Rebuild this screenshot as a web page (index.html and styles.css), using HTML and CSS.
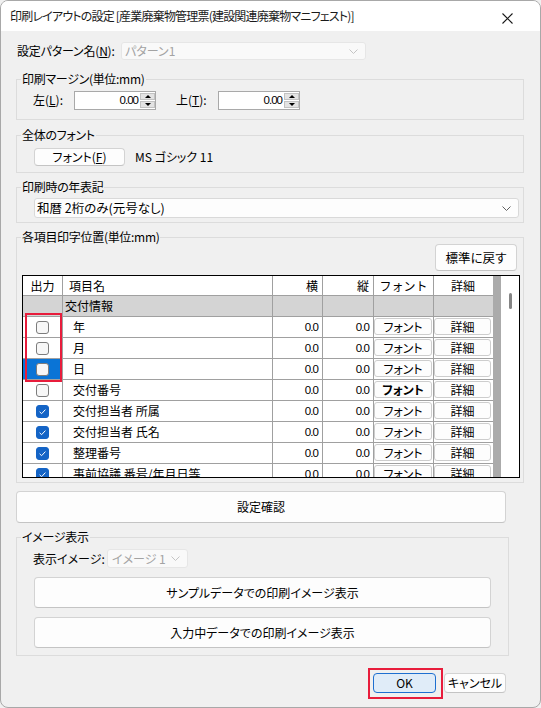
FILE: index.html
```html
<!DOCTYPE html>
<html lang="ja">
<head>
<meta charset="utf-8">
<title>印刷レイアウトの設定</title>
<link rel="stylesheet" href="styles.css">
</head>
<body>
<div class="window">
  <div class="titlebar">
    <span class="title">印刷レイアウトの設定 [産業廃棄物管理票(建設関連廃棄物マニフェスト)]</span>
    <svg class="close" width="11" height="11" viewBox="0 0 11 11"><path d="M0.5 0.5 L10.5 10.5 M10.5 0.5 L0.5 10.5" stroke="#1a1a1a" stroke-width="1.1" fill="none"/></svg>
  </div>
  <div class="content">
    <div class="pattern-row">
      <span class="lbl pattern-lbl">設定パターン名(<u>N</u>):</span>
      <div class="combo disabled pattern-combo">
        <span class="combo-text">パターン1</span>
        <svg class="chev" width="9" height="5" viewBox="0 0 9 5"><path d="M0.5 0.5 L4.5 4.5 L8.5 0.5" stroke="#c4c4c4" fill="none"/></svg>
      </div>
    </div>

    <div class="group margin-group">
      <span class="group-label">印刷マージン(単位:mm)</span>
      <div class="margin-row">
        <span class="lbl spin-lbl">左(<u>L</u>):</span>
        <div class="spin">
          <span class="spin-val">0.00</span>
          <span class="spin-btns"><span class="spin-btn"><i class="tri-up"></i></span><span class="spin-btn"><i class="tri-down"></i></span></span>
        </div>
        <span class="lbl spin-lbl spin-lbl2">上(<u>T</u>):</span>
        <div class="spin">
          <span class="spin-val">0.00</span>
          <span class="spin-btns"><span class="spin-btn"><i class="tri-up"></i></span><span class="spin-btn"><i class="tri-down"></i></span></span>
        </div>
      </div>
    </div>

    <div class="group font-group">
      <span class="group-label">全体のフォント</span>
      <div class="font-row">
        <button class="btn font-btn">フォント(<u>F</u>)</button>
        <span class="font-name">MS ゴシック 11</span>
      </div>
    </div>

    <div class="group year-group">
      <span class="group-label">印刷時の年表記</span>
      <div class="combo year-combo">
        <span class="combo-text">和暦 2桁のみ(元号なし)</span>
        <svg class="chev" width="9" height="5" viewBox="0 0 9 5"><path d="M0.5 0.5 L4.5 4.5 L8.5 0.5" stroke="#606060" fill="none"/></svg>
      </div>
    </div>

    <div class="group pos-group">
      <span class="group-label">各項目印字位置(単位:mm)</span>
      <div class="reset-row">
        <button class="btn reset-btn">標準に戻す</button>
      </div>
      <div class="table">
        <div class="rows">
          <div class="row head">
            <div class="cell c-out center">出力</div>
            <div class="cell c-name hname">項目名</div>
            <div class="cell c-x right">横</div>
            <div class="cell c-y right">縦</div>
            <div class="cell c-font center">フォント</div>
            <div class="cell c-det center">詳細</div>
          </div>
          <div class="row grp">
            <div class="cell c-out"></div>
            <div class="cell c-name gname">交付情報</div>
            <div class="cell c-x"></div>
            <div class="cell c-y"></div>
            <div class="cell c-font"></div>
            <div class="cell c-det"></div>
          </div>
          <div class="row">
            <div class="cell c-out center"><span class="cb"></span></div>
            <div class="cell c-name iname">年</div>
            <div class="cell c-x right num">0.0</div>
            <div class="cell c-y right num">0.0</div>
            <div class="cell c-font"><span class="cbtn">フォント</span></div>
            <div class="cell c-det"><span class="cbtn">詳細</span></div>
          </div>
          <div class="row">
            <div class="cell c-out center"><span class="cb"></span></div>
            <div class="cell c-name iname">月</div>
            <div class="cell c-x right num">0.0</div>
            <div class="cell c-y right num">0.0</div>
            <div class="cell c-font"><span class="cbtn">フォント</span></div>
            <div class="cell c-det"><span class="cbtn">詳細</span></div>
          </div>
          <div class="row">
            <div class="cell c-out center sel"><span class="cb"></span></div>
            <div class="cell c-name iname">日</div>
            <div class="cell c-x right num">0.0</div>
            <div class="cell c-y right num">0.0</div>
            <div class="cell c-font"><span class="cbtn">フォント</span></div>
            <div class="cell c-det"><span class="cbtn">詳細</span></div>
          </div>
          <div class="row">
            <div class="cell c-out center"><span class="cb"></span></div>
            <div class="cell c-name iname">交付番号</div>
            <div class="cell c-x right num">0.0</div>
            <div class="cell c-y right num">0.0</div>
            <div class="cell c-font"><span class="cbtn bold">フォント</span></div>
            <div class="cell c-det"><span class="cbtn">詳細</span></div>
          </div>
          <div class="row">
            <div class="cell c-out center"><span class="cb on"><svg width="13" height="13" viewBox="0 0 13 13"><path d="M3.6 6.8 L5.6 8.7 L9.4 4.6" stroke="#fff" stroke-width="1" fill="none"/></svg></span></div>
            <div class="cell c-name iname">交付担当者 所属</div>
            <div class="cell c-x right num">0.0</div>
            <div class="cell c-y right num">0.0</div>
            <div class="cell c-font"><span class="cbtn">フォント</span></div>
            <div class="cell c-det"><span class="cbtn">詳細</span></div>
          </div>
          <div class="row">
            <div class="cell c-out center"><span class="cb on"><svg width="13" height="13" viewBox="0 0 13 13"><path d="M3.6 6.8 L5.6 8.7 L9.4 4.6" stroke="#fff" stroke-width="1" fill="none"/></svg></span></div>
            <div class="cell c-name iname">交付担当者 氏名</div>
            <div class="cell c-x right num">0.0</div>
            <div class="cell c-y right num">0.0</div>
            <div class="cell c-font"><span class="cbtn">フォント</span></div>
            <div class="cell c-det"><span class="cbtn">詳細</span></div>
          </div>
          <div class="row">
            <div class="cell c-out center"><span class="cb on"><svg width="13" height="13" viewBox="0 0 13 13"><path d="M3.6 6.8 L5.6 8.7 L9.4 4.6" stroke="#fff" stroke-width="1" fill="none"/></svg></span></div>
            <div class="cell c-name iname">整理番号</div>
            <div class="cell c-x right num">0.0</div>
            <div class="cell c-y right num">0.0</div>
            <div class="cell c-font"><span class="cbtn">フォント</span></div>
            <div class="cell c-det"><span class="cbtn">詳細</span></div>
          </div>
          <div class="row">
            <div class="cell c-out center"><span class="cb on"><svg width="13" height="13" viewBox="0 0 13 13"><path d="M3.6 6.8 L5.6 8.7 L9.4 4.6" stroke="#fff" stroke-width="1" fill="none"/></svg></span></div>
            <div class="cell c-name iname">事前協議 番号/年月日等</div>
            <div class="cell c-x right num">0.0</div>
            <div class="cell c-y right num">0.0</div>
            <div class="cell c-font"><span class="cbtn">フォント</span></div>
            <div class="cell c-det"><span class="cbtn">詳細</span></div>
          </div>
        </div>
        <div class="vscroll"><span class="thumb"></span></div>
        <span class="mark mark-cb"></span>
      </div>
    </div>

    <button class="btn confirm-btn">設定確認</button>

    <div class="group image-group">
      <span class="group-label">イメージ表示</span>
      <div class="image-row">
        <span class="lbl img-lbl">表示イメージ:</span>
        <div class="combo disabled img-combo">
          <span class="combo-text">イメージ 1</span>
          <svg class="chev" width="9" height="5" viewBox="0 0 9 5"><path d="M0.5 0.5 L4.5 4.5 L8.5 0.5" stroke="#c4c4c4" fill="none"/></svg>
        </div>
      </div>
      <button class="btn wide-btn first">サンプルデータでの印刷イメージ表示</button>
      <button class="btn wide-btn">入力中データでの印刷イメージ表示</button>
    </div>

    <div class="ok-row">
      <button class="btn ok-btn">OK<span class="mark mark-ok"></span></button>
      <button class="btn cancel-btn">キャンセル</button>
    </div>
  </div>
</div>
</body>
</html>
```

FILE: styles.css
```css
* { box-sizing: border-box; }
html, body { margin: 0; padding: 0; }
body {
  width: 541px;
  height: 708px;
  overflow: hidden;
  background: #f0f0f0;
  font-family: "Noto Sans CJK JP", "Noto Sans", sans-serif;
  font-size: 12px;
  color: #000;
  font-feature-settings: "palt";
}
u { text-decoration: underline; text-underline-offset: 1px; }

.window {
  width: 541px;
  height: 708px;
  border: 1px solid #a8a8a8;
  border-radius: 8px;
  background: #f0f0f0;
  overflow: hidden;
  display: flex;
  flex-direction: column;
}

.titlebar {
  height: 30px;
  flex: none;
  background: #fff;
  display: flex;
  align-items: center;
  padding-left: 9px;
  padding-right: 27px;
}
.title { font-size: 12px; color: #1a1a1a; line-height: 16px; margin-top: 0; letter-spacing: -0.8px; }
.close { margin-left: auto; margin-top: 4px; }

.content {
  flex: 1;
  padding: 0 16px 0 15px;
  display: flex;
  flex-direction: column;
}

.lbl { line-height: 16px; white-space: nowrap; }

.pattern-row {
  margin-top: 11px;
  height: 18px;
  display: flex;
  align-items: center;
}
.pattern-lbl { padding-left: 1px; width: 105px; letter-spacing: -0.2px; }

.combo {
  display: flex;
  align-items: center;
  border: 1px solid #d9d9d9;
  border-radius: 3px;
  background: #fdfdfd;
  padding-left: 3px;
  padding-right: 7px;
}
.combo.disabled { background: #f9f9f9; border-color: #e6e6e6; color: #a3a3a3; }
.combo-text { flex: 1; line-height: 16px; white-space: nowrap; }
.chev { flex: none; }
.pattern-combo { width: 245px; height: 18px; }

.group {
  position: relative;
  border: 1px solid #dcdcdc;
}
.group-label {
  position: absolute;
  top: -9px;
  left: 4px;
  padding: 0 1px;
  background: #f0f0f0;
  line-height: 16px;
  white-space: nowrap;
  letter-spacing: -0.3px;
}

.margin-group { margin-top: 19px; padding: 11px 0 10px 16px; }
.margin-row { display: flex; align-items: center; height: 18px; }
.spin-lbl { width: 41px; }
.spin-lbl2 { margin-left: 20px; width: 42px; }
.spin {
  width: 82px;
  height: 19px;
  border: 1px solid #a9a9a9;
  background: #fff;
  display: flex;
  align-items: stretch;
}
.spin-val {
  flex: 1;
  text-align: right;
  font-family: "Liberation Sans Narrow", "Liberation Sans", sans-serif;
  font-size: 11.5px;
  letter-spacing: -1px;
  line-height: 17px;
  padding-right: 2px;
}
.spin-btns {
  width: 15px;
  display: flex;
  flex-direction: column;
  gap: 1px;
  padding: 1px 0 1px 0;
}
.spin-btn {
  flex: 1;
  background: #e3e3e3;
  border: 1px solid #c2c2c2;
  display: flex;
  align-items: center;
  justify-content: center;
}
.tri-up { width: 0; height: 0; border-left: 3px solid transparent; border-right: 3px solid transparent; border-bottom: 3px solid #000; }
.tri-down { width: 0; height: 0; border-left: 3px solid transparent; border-right: 3px solid transparent; border-top: 3px solid #000; }

.btn {
  font-family: inherit;
  font-size: 12px;
  font-feature-settings: "palt";
  color: #000;
  background: #fdfdfd;
  border: 1px solid #d3d3d3;
  border-bottom-color: #c4c4c4;
  border-radius: 4px;
  padding: 0;
  line-height: 16px;
  white-space: nowrap;
}

.font-group { margin-top: 15px; padding: 12px 0 6px 17px; }
.font-row { display: flex; align-items: center; }
.font-btn { width: 91px; height: 18px; }
.font-name { margin-left: 10px; line-height: 16px; }

.year-group { margin-top: 14px; padding: 10px 5px 4px 17px; }
.year-combo { width: 485px; height: 20px; padding-left: 2px; font-size: 12.5px; }

.pos-group { margin-top: 14px; padding: 6px 4px 4px 5px; }
.reset-row { display: flex; justify-content: flex-end; padding-right: 2px; }
.reset-btn { width: 82px; height: 27px; font-size: 12.5px; }

.table {
  position: relative;
  margin-top: 4px;
  width: 498px;
  height: 203px;
  border: 1px solid #000;
  display: flex;
  overflow: hidden;
  font-feature-settings: normal;
}
.rows {
  width: 478px;
  background: #ababab;
  display: flex;
  flex-direction: column;
}
.row {
  display: flex;
  height: 21px;
  flex: none;
  background: #fff;
  border-bottom: 1px solid #a0a0a0;
  width: 470px;
}
.row.head { height: 20px; }
.row.grp { background: #d4d4d4; }
.cell {
  border-right: 1px solid #a0a0a0;
  line-height: 20px;
  white-space: nowrap;
  overflow: hidden;
  display: flex;
  align-items: center;
}
.row.head .cell { line-height: 19px; }
.c-out { width: 40px; }
.c-name { width: 210px; }
.c-x { width: 50px; }
.c-y { width: 51px; }
.c-font { width: 60px; align-items: flex-start; padding-top: 1px; }
.c-det { width: 58px; border-right: none; align-items: flex-start; padding-top: 1px; }
.row.head .c-font, .row.head .c-det { align-items: center; padding-top: 0; }
.center { justify-content: center; }
.right { justify-content: flex-end; padding-right: 4px; }
.hname { padding-left: 6px; }
.gname { padding-left: 2px; }
.iname { padding-left: 10px; }
.num {
  font-family: "Liberation Sans Narrow", "Liberation Sans", sans-serif;
  font-size: 11.5px;
  letter-spacing: -0.9px;
}
.sel { background: #0a74d6; }

.cb {
  width: 13px;
  height: 13px;
  border: 1px solid #7c7c7c;
  border-radius: 3px;
  background: #f7f7f7;
  display: block;
}
.cb.on {
  background: #1464c6;
  border-color: #1464c6;
  position: relative;
}
.cb.on svg { position: absolute; left: -1px; top: -1px; }

.cbtn {
  display: flex;
  align-items: center;
  justify-content: center;
  height: 17px;
  border: 1px solid #cdcdcd;
  border-radius: 3px;
  background: #fdfdfd;
  line-height: 15px;
  font-feature-settings: "palt";
}
.c-font .cbtn { width: 58px; }
.c-det .cbtn { width: 57px; }
.cbtn.bold { font-weight: bold; }

.vscroll {
  flex: 1;
  background: #fff;
  position: relative;
}
.thumb {
  position: absolute;
  left: 8px;
  top: 17px;
  width: 3px;
  height: 16px;
  border-radius: 2px;
  background: #858585;
}

.mark {
  position: absolute;
  border: 2px solid #e81c3b;
  pointer-events: none;
}
.mark-cb { left: 2px; top: 37px; width: 37px; height: 69px; }

.confirm-btn { margin-top: 8px; width: 490px; height: 32px; }

.image-group { margin-top: 14px; width: 493px; padding: 11px 17px 7px 16px; }
.image-row { display: flex; align-items: center; height: 19px; }
.img-lbl { width: 74px; }
.img-combo { width: 81px; height: 19px; padding-left: 4px; }
.wide-btn { display: block; width: 457px; height: 31px; margin-top: 9px; margin-left: 1px; }
.wide-btn.first { margin-top: 9px; }

.ok-row {
  margin-top: 17px;
  display: flex;
  justify-content: flex-end;
  gap: 8px;
  padding-right: 18px;
}
.ok-btn {
  position: relative;
  width: 63px;
  height: 20px;
  background: #e0ecf8;
  border: 1px solid #1e6fd0;
}
.mark-ok { left: -6px; top: -6px; right: -8px; bottom: -7px; }
.cancel-btn { width: 62px; height: 20px; }
```
